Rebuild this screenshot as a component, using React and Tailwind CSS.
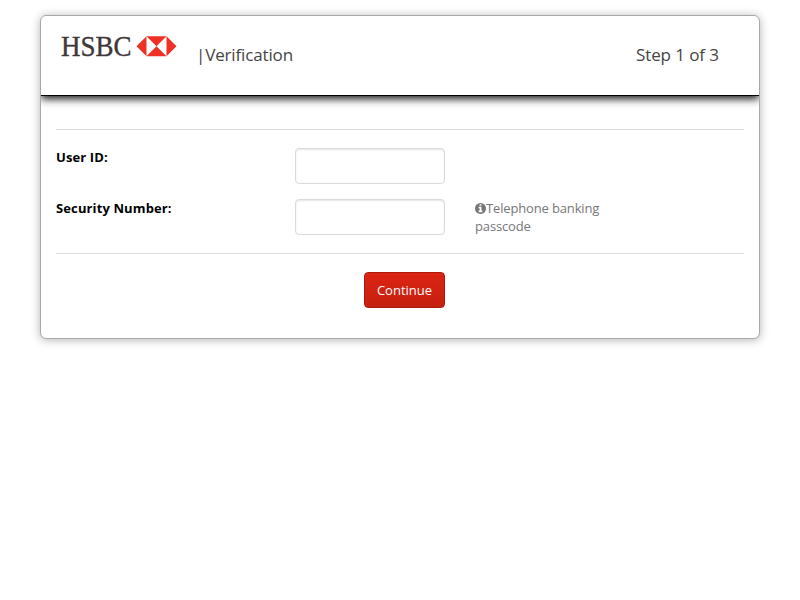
function InfoIcon() {
  return (
    <svg className="inline-block size-[11px] align-[-1px]" viewBox="0 0 1536 1536" fill="currentColor" aria-hidden="true">
      <path d="M1024 1248v-160q0-14-9-23t-23-9h-96V544q0-14-9-23t-23-9H544q-14 0-23 9t-9 23v160q0 14 9 23t23 9h96v320h-96q-14 0-23 9t-9 23v160q0 14 9 23t23 9h448q14 0 23-9t9-23zM896 352V192q0-14-9-23t-23-9H672q-14 0-23 9t-9 23v160q0 14 9 23t23 9h192q14 0 23-9t9-23zM1536 768q0 209-103 385.500t-279.500 279.500T768 1536t-385.500-103T103 1153.500 0 768t103-385.500T382.500 103 768 0t385.500 103T1433 382.500 1536 768z" />
    </svg>
  );
}

function Logo() {
  return (
    <svg className="block h-[30px] w-[116px] shrink-0 overflow-visible" viewBox="0 0 116 30" role="img" aria-label="HSBC">
      <text
        x="0"
        y="20"
        className="fill-[#3e3639] stroke-[#3e3639] font-['Liberation_Serif',serif] text-[29.5px] [stroke-width:0.35px]"
        textLength="70.5"
        lengthAdjust="spacingAndGlyphs"
      >
        HSBC
      </text>
      <polygon points="75.5,10.3 85.5,0.3 105.5,0.3 115.5,10.3 105.5,20.3 85.5,20.3" fill="#ee3124" />
      <polygon points="85.5,0.3 95.5,10.3 85.5,20.3" fill="#fff" />
      <polygon points="105.5,0.3 95.5,10.3 105.5,20.3" fill="#fff" />
    </svg>
  );
}

function Field({ label, hint }) {
  return (
    <div className="flex h-[36px] items-start">
      <div className="w-[239px] font-bold tracking-[0.12px] text-black">{label}</div>
      <input
        type="text"
        aria-label={label}
        className="h-[36px] w-[150px] rounded-[4px] border border-[#dadada] bg-white px-3 shadow-[inset_0_1px_2px_rgba(0,0,0,0.1)] outline-none"
      />
      {hint && (
        <div className="ml-[30px] w-[150px] tracking-[-0.15px] text-[#777]">
          <InfoIcon />
          {hint}
        </div>
      )}
    </div>
  );
}

export default function App() {
  return (
    <div className="min-h-screen bg-white px-10 pt-[15px] font-['Open_Sans',sans-serif] text-[13px] leading-[18px]">
      <div className="h-[324px] rounded-[6px] border border-[#a9a9a9] bg-white shadow-[0_1px_10px_rgba(0,0,0,0.3)]">
        <header className="flex h-[80px] items-start border-b border-black pl-5 pr-10 pt-5 text-[17px] leading-[24px] text-[#444] shadow-[0_3px_8px_rgba(0,0,0,0.9)] [clip-path:inset(0_0_-15px_0)]">
          <Logo />
          <div className="ml-[19px] mt-[7px] tracking-[-0.15px]">|Verification</div>
          <div className="ml-auto mt-[7px] tracking-[-0.08px]">Step 1 of 3</div>
        </header>
        <main className="px-[15px] pt-[33px]">
          <div className="flex flex-col gap-[15px] border-y border-[#ddd] py-[18px]">
            <Field label="User ID:" />
            <Field label="Security Number:" hint="Telephone banking passcode" />
          </div>
          <button
            type="button"
            className="ml-[308px] mt-[18px] block h-[36px] w-[81px] rounded-[4px] border border-[#a91b0c] bg-linear-to-b from-[#dc2413] to-[#c52010] text-white"
          >
            Continue
          </button>
        </main>
      </div>
    </div>
  );
}
